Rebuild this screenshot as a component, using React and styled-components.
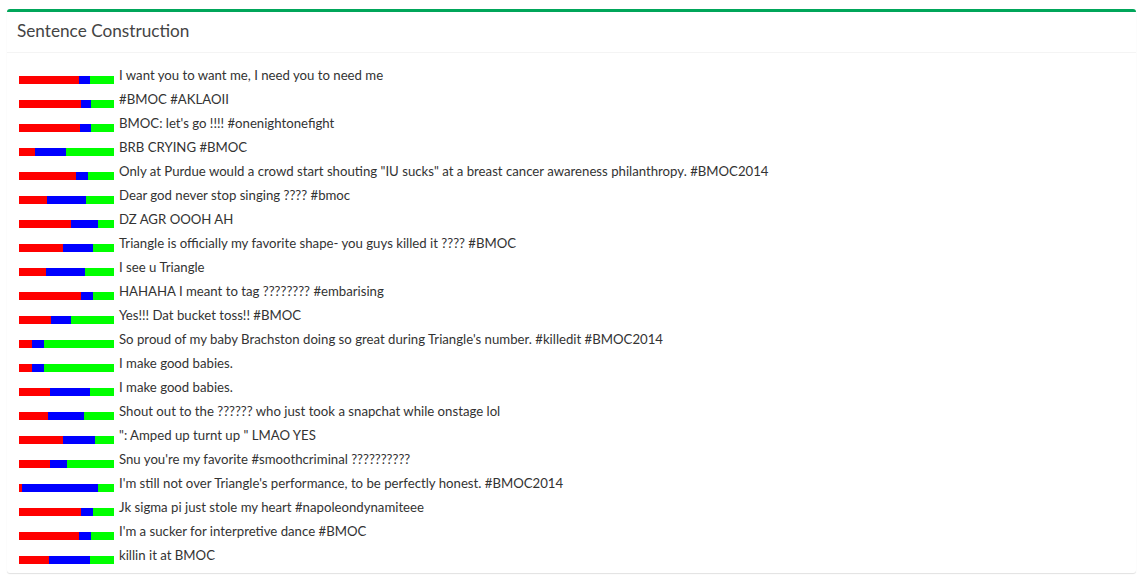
import React from 'react';
import styled, { createGlobalStyle } from 'styled-components';

const GlobalStyle = createGlobalStyle`
  body {
    margin: 0;
    background: #fff;
    font-family: "Source Sans Pro", Lato, "Liberation Sans", sans-serif;
  }
`;

const rows = [
  [60, 11, 24, 'I want you to want me, I need you to need me'],
  [62, 10, 23, '#BMOC #AKLAOII'],
  [61, 11, 23, "BMOC: let's go !!!! #onenightonefight"],
  [16, 31, 48, 'BRB CRYING #BMOC'],
  [57, 12, 26, 'Only at Purdue would a crowd start shouting "IU sucks" at a breast cancer awareness philanthropy. #BMOC2014'],
  [28, 39, 28, 'Dear god never stop singing ???? #bmoc'],
  [52, 27, 16, 'DZ AGR OOOH AH'],
  [44, 30, 21, 'Triangle is officially my favorite shape- you guys killed it ???? #BMOC'],
  [27, 39, 29, 'I see u Triangle'],
  [62, 12, 21, 'HAHAHA I meant to tag ???????? #embarising'],
  [32, 20, 43, 'Yes!!! Dat bucket toss!! #BMOC'],
  [13, 12, 70, "So proud of my baby Brachston doing so great during Triangle's number. #killedit #BMOC2014"],
  [13, 12, 70, 'I make good babies.'],
  [31, 40, 24, 'I make good babies.'],
  [29, 36, 30, 'Shout out to the ?????? who just took a snapchat while onstage lol'],
  [44, 32, 19, '": Amped up turnt up " LMAO YES'],
  [31, 17, 47, "Snu you're my favorite #smoothcriminal ??????????"],
  [3, 76, 16, "I'm still not over Triangle's performance, to be perfectly honest. #BMOC2014"],
  [62, 12, 21, 'Jk sigma pi just stole my heart #napoleondynamiteee'],
  [60, 12, 23, "I'm a sucker for interpretive dance #BMOC"],
  [30, 41, 24, 'killin it at BMOC'],
];

const Page = styled.div`
  padding: 9px 8px 14px 7px;
`;

const Box = styled.div`
  background: #fff;
  border-top: 3px solid #00a65a;
  border-radius: 3px;
  box-shadow: 0 1px 1px rgba(0, 0, 0, 0.12);
`;

const BoxHeader = styled.div`
  height: 41px;
  display: flex;
  align-items: center;
  padding: 0 10px 3px;
  box-sizing: border-box;
  border-bottom: 1px solid #f4f4f4;
`;

const Title = styled.h3`
  margin: 0;
  font-size: 17.2px;
  font-weight: 400;
  color: #444;
`;

const BoxBody = styled.div`
  padding: 10px 10px 6px 12px;
`;

const Row = styled.div`
  display: flex;
  height: 24px;
`;

const Bar = styled.div`
  display: flex;
  flex: none;
  width: 95px;
  height: 8px;
  margin-top: 13px;
  margin-right: 5px;
`;

const Seg = styled.div`
  height: 100%;
  background: ${(p) => p.$color};
`;

const Text = styled.span`
  font-size: 13.2px;
  line-height: 24px;
  color: #333;
  white-space: nowrap;
`;

export default function App() {
  return (
    <Page>
      <GlobalStyle />
      <Box>
        <BoxHeader>
          <Title>Sentence Construction</Title>
        </BoxHeader>
        <BoxBody>
          {rows.map(([r, b, g, text], i) => (
            <Row key={i}>
              <Bar>
                <Seg $color="#ff0000" style={{ width: r }} />
                <Seg $color="#0000ff" style={{ width: b }} />
                <Seg $color="#00ff00" style={{ width: g }} />
              </Bar>
              <Text>{text}</Text>
            </Row>
          ))}
        </BoxBody>
      </Box>
    </Page>
  );
}
